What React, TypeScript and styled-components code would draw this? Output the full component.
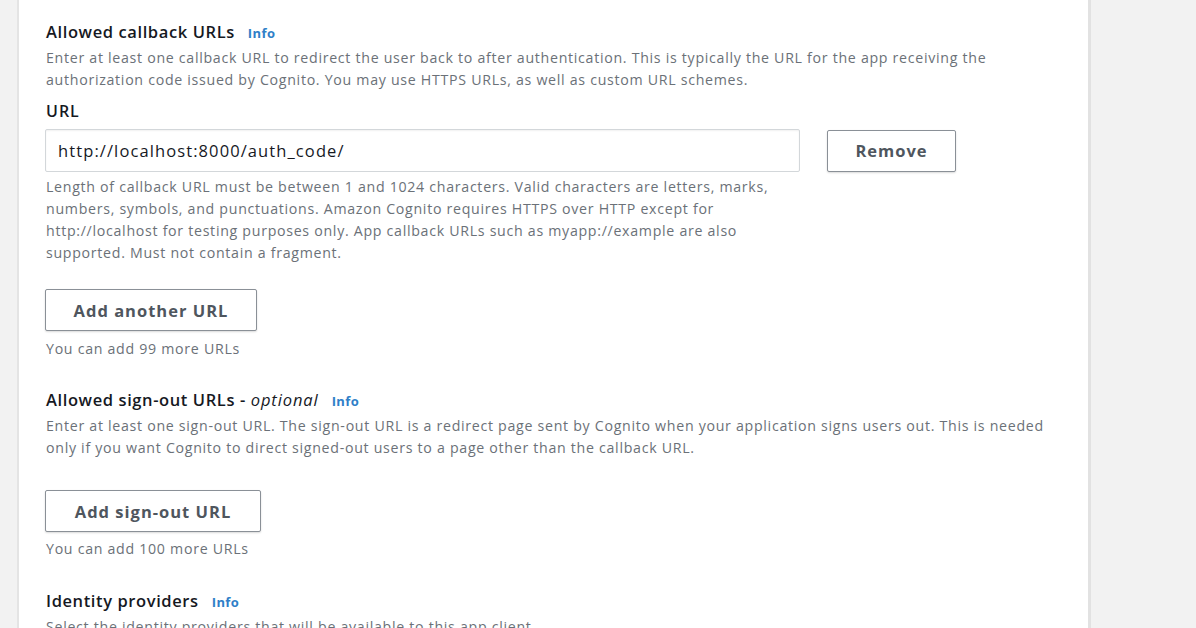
import React from "react";
import styled, { createGlobalStyle } from "styled-components";

const GlobalStyle = createGlobalStyle`
  html, body {
    margin: 0;
    padding: 0;
    background: #f2f2f2;
    font-family: "Open Sans", "Noto Sans", sans-serif;
    overflow: hidden;
  }
`;

const Page = styled.div`
  display: flex;
  width: 1196px;
  height: 628px;
  overflow: hidden;
  background: #f2f2f2;
`;

const Gutter = styled.div<{ $w: number }>`
  width: ${(p) => p.$w}px;
  flex-shrink: 0;
  background: #f2f2f2;
`;

const Card = styled.div`
  width: 1074px;
  flex-shrink: 0;
  background: #ffffff;
  border-left: 2px solid #e4e4e4;
  border-right: 3px solid #e2e2e2;
  padding: 22px 0 0 27px;
  box-sizing: border-box;
`;

const Section = styled.section<{ $mt?: number }>`
  margin-top: ${(p) => p.$mt ?? 0}px;
`;

const Title = styled.h3`
  margin: 0;
  font-size: 16.5px;
  font-weight: 600;
  letter-spacing: 0.6px;
  color: #16191f;
  line-height: 20px;
  display: flex;
  align-items: baseline;
  gap: 13px;
  white-space: nowrap;
`;

const Optional = styled.i`
  font-weight: 400;
  letter-spacing: 0.9px;
`;

const Info = styled.a`
  font-size: 13px;
  font-weight: 700;
  letter-spacing: 0.4px;
  color: #2f7fc8;
  text-decoration: none;
`;

const Desc = styled.p`
  margin: 4px 0 0;
  font-size: 14.2px;
  letter-spacing: 0.7px;
  line-height: 22px;
  color: #6b7178;
  white-space: nowrap;
`;

const Label = styled.div`
  margin-top: 10px;
  font-size: 16px;
  font-weight: 600;
  letter-spacing: 1px;
  color: #16191f;
  line-height: 20px;
`;

const Row = styled.div`
  display: flex;
  align-items: center;
  gap: 27px;
  margin: 8px 0 0 -1px;
`;

const Input = styled.input`
  width: 755px;
  height: 43px;
  box-sizing: border-box;
  border: 1px solid #d3d7da;
  border-radius: 2px;
  padding: 0 12px;
  font-family: inherit;
  font-size: 16.5px;
  letter-spacing: 1.1px;
  color: #16191f;
  outline: none;
  box-shadow: inset 0 1px 2px rgba(0, 0, 0, 0.06);
`;

const Button = styled.button<{ $w: number; $mt?: number }>`
  width: ${(p) => p.$w}px;
  height: 42px;
  margin-top: ${(p) => p.$mt ?? 0}px;
  margin-left: -1px;
  box-sizing: border-box;
  background: #ffffff;
  border: 1.5px solid #8a9097;
  border-radius: 2px;
  font-family: inherit;
  font-size: 16.5px;
  font-weight: 700;
  letter-spacing: 1px;
  color: #4f565e;
  cursor: pointer;
  box-shadow: 0 1px 2px rgba(0, 0, 0, 0.15);
`;

const RowButton = styled(Button)`
  margin-left: 0;
`;

const Hint = styled.div<{ $mt: number }>`
  margin-top: ${(p) => p.$mt}px;
  font-size: 14.2px;
  letter-spacing: 0.7px;
  line-height: 20px;
  color: #6b7178;
`;

export default function App() {
  return (
    <>
      <GlobalStyle />
      <Page>
        <Gutter $w={17} />
        <Card>
          <Section>
            <Title>
              Allowed callback URLs <Info href="#">Info</Info>
            </Title>
            <Desc>
              Enter at least one callback URL to redirect the user back to after authentication. This is typically the URL for the app receiving the
              <br />
              authorization code issued by Cognito. You may use HTTPS URLs, as well as custom URL schemes.
            </Desc>
            <Label>URL</Label>
            <Row>
              <Input defaultValue="http://localhost:8000/auth_code/" />
              <RowButton $w={129}>Remove</RowButton>
            </Row>
            <Desc>
              Length of callback URL must be between 1 and 1024 characters. Valid characters are letters, marks,
              <br />
              numbers, symbols, and punctuations. Amazon Cognito requires HTTPS over HTTP except for
              <br />
              http://localhost for testing purposes only. App callback URLs such as myapp://example are also
              <br />
              supported. Must not contain a fragment.
            </Desc>
            <Button $w={212} $mt={25}>Add another URL</Button>
            <Hint $mt={8}>You can add 99 more URLs</Hint>
          </Section>
          <Section $mt={31}>
            <Title>
              <span>
                Allowed sign-out URLs - <Optional>optional</Optional>
              </span>
              <Info href="#">Info</Info>
            </Title>
            <Desc>
              Enter at least one sign-out URL. The sign-out URL is a redirect page sent by Cognito when your application signs users out. This is needed
              <br />
              only if you want Cognito to direct signed-out users to a page other than the callback URL.
            </Desc>
            <Button $w={216} $mt={31}>Add sign-out URL</Button>
            <Hint $mt={7}>You can add 100 more URLs</Hint>
          </Section>
          <Section $mt={32}>
            <Title>
              Identity providers <Info href="#">Info</Info>
            </Title>
            <Desc>Select the identity providers that will be available to this app client.</Desc>
          </Section>
        </Card>
        <Gutter $w={105} />
      </Page>
    </>
  );
}
